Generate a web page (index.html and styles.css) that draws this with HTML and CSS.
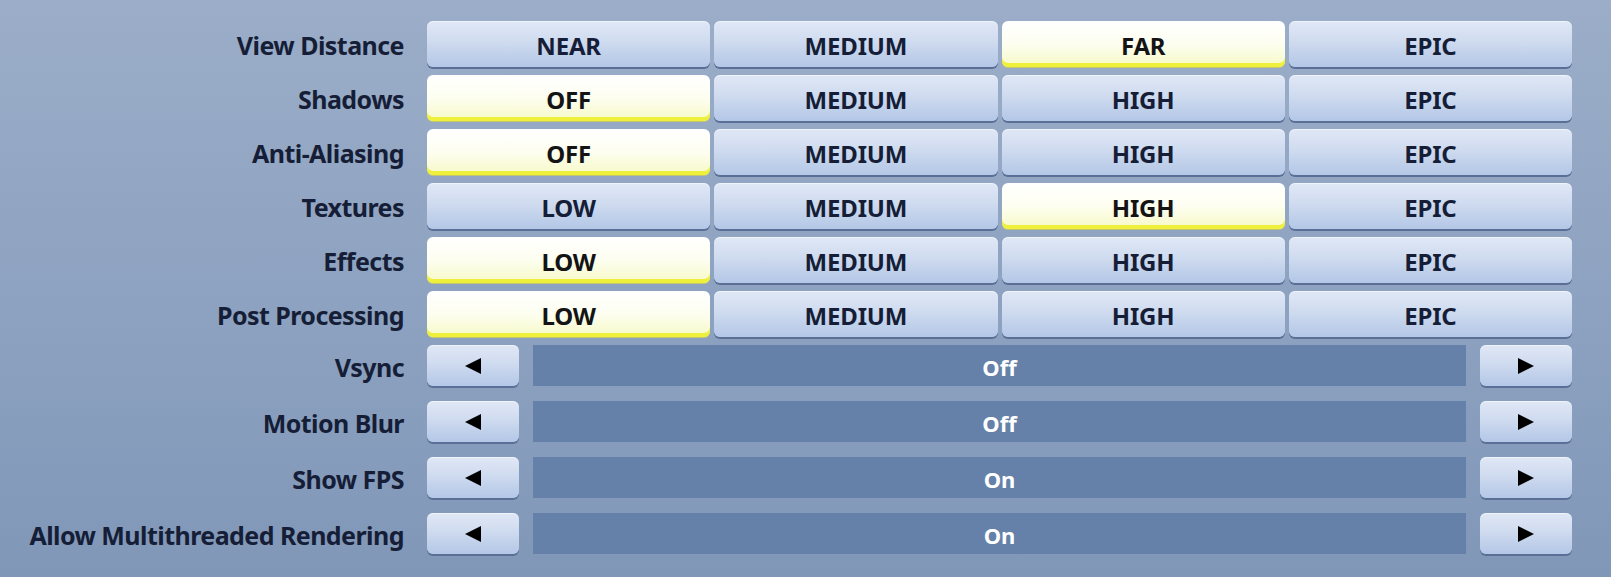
FILE: index.html
```html
<!DOCTYPE html>
<html>
<head>
<meta charset="utf-8">
<link rel="stylesheet" href="styles.css">
</head>
<body>
<div class="settings">
  <div class="label">View Distance</div>
  <div class="choices">
    <div class="btn">NEAR</div><div class="btn">MEDIUM</div><div class="btn sel">FAR</div><div class="btn">EPIC</div>
  </div>
  <div class="label">Shadows</div>
  <div class="choices">
    <div class="btn sel">OFF</div><div class="btn">MEDIUM</div><div class="btn">HIGH</div><div class="btn">EPIC</div>
  </div>
  <div class="label">Anti-Aliasing</div>
  <div class="choices">
    <div class="btn sel">OFF</div><div class="btn">MEDIUM</div><div class="btn">HIGH</div><div class="btn">EPIC</div>
  </div>
  <div class="label">Textures</div>
  <div class="choices">
    <div class="btn">LOW</div><div class="btn">MEDIUM</div><div class="btn sel">HIGH</div><div class="btn">EPIC</div>
  </div>
  <div class="label">Effects</div>
  <div class="choices">
    <div class="btn sel">LOW</div><div class="btn">MEDIUM</div><div class="btn">HIGH</div><div class="btn">EPIC</div>
  </div>
  <div class="label">Post Processing</div>
  <div class="choices">
    <div class="btn sel">LOW</div><div class="btn">MEDIUM</div><div class="btn">HIGH</div><div class="btn">EPIC</div>
  </div>
</div>
<div class="settings toggles">
  <div class="label">Vsync</div>
  <div class="stepper">
    <div class="btn arrow"><svg width="16" height="16" viewBox="0 0 16 16"><polygon points="0,8 16,0 16,16" fill="#000"/></svg></div>
    <div class="value">Off</div>
    <div class="btn arrow"><svg width="16" height="16" viewBox="0 0 16 16"><polygon points="16,8 0,0 0,16" fill="#000"/></svg></div>
  </div>
  <div class="label">Motion Blur</div>
  <div class="stepper">
    <div class="btn arrow"><svg width="16" height="16" viewBox="0 0 16 16"><polygon points="0,8 16,0 16,16" fill="#000"/></svg></div>
    <div class="value">Off</div>
    <div class="btn arrow"><svg width="16" height="16" viewBox="0 0 16 16"><polygon points="16,8 0,0 0,16" fill="#000"/></svg></div>
  </div>
  <div class="label">Show FPS</div>
  <div class="stepper">
    <div class="btn arrow"><svg width="16" height="16" viewBox="0 0 16 16"><polygon points="0,8 16,0 16,16" fill="#000"/></svg></div>
    <div class="value">On</div>
    <div class="btn arrow"><svg width="16" height="16" viewBox="0 0 16 16"><polygon points="16,8 0,0 0,16" fill="#000"/></svg></div>
  </div>
  <div class="label">Allow Multithreaded Rendering</div>
  <div class="stepper">
    <div class="btn arrow"><svg width="16" height="16" viewBox="0 0 16 16"><polygon points="0,8 16,0 16,16" fill="#000"/></svg></div>
    <div class="value">On</div>
    <div class="btn arrow"><svg width="16" height="16" viewBox="0 0 16 16"><polygon points="16,8 0,0 0,16" fill="#000"/></svg></div>
  </div>
</div>
</body>
</html>
```
FILE: styles.css
```css
html, body {
  margin: 0;
  height: 100%;
}
body {
  background: linear-gradient(180deg, #9badc8 0%, #8ea3c1 50%, #8197b8 100%);
  font-family: "Noto Sans", "Open Sans", sans-serif;
  font-weight: 700;
  color: #151e36;
  padding-top: 21px;
  box-sizing: border-box;
  overflow: hidden;
}
.settings {
  display: grid;
  grid-template-columns: 404px 1145px;
  column-gap: 23px;
  row-gap: 8px;
  grid-auto-rows: 46px;
}
.toggles {
  margin-top: 8px;
  grid-auto-rows: 41px;
  row-gap: 15px;
}
.label {
  display: flex;
  align-items: center;
  justify-content: flex-end;
  font-size: 25px;
  letter-spacing: -0.55px;
  padding-top: 2px;
  white-space: nowrap;
}
.choices {
  display: grid;
  grid-template-columns: repeat(4, 1fr);
  column-gap: 4px;
}
.btn {
  display: flex;
  align-items: center;
  justify-content: center;
  border-radius: 6px;
  background: linear-gradient(180deg, #e0e8f6 0%, #cfdbef 45%, #b3c7e7 100%);
  box-shadow: 0 2px 0 #5b6e96, inset 0 1px 0 rgba(255,255,255,0.5);
  font-size: 24px;
  letter-spacing: -0.2px;
  padding-top: 2px;
  box-sizing: border-box;
}
.btn.sel {
  background: linear-gradient(180deg, #ffffff 0%, #fdfef0 50%, #f6f9c6 100%);
  box-shadow: inset 0 -4px 0 #eef03c, 0 1px 0 #c4c66a;
  color: #141414;
}
.stepper {
  display: grid;
  grid-template-columns: 92px 1fr 92px;
  column-gap: 14px;
}
.arrow {
  padding-top: 0;
}
.value {
  background: #6581a9;
  color: #ffffff;
  display: flex;
  align-items: center;
  justify-content: center;
  font-size: 22px;
  padding-top: 2px;
  box-sizing: border-box;
}
```
